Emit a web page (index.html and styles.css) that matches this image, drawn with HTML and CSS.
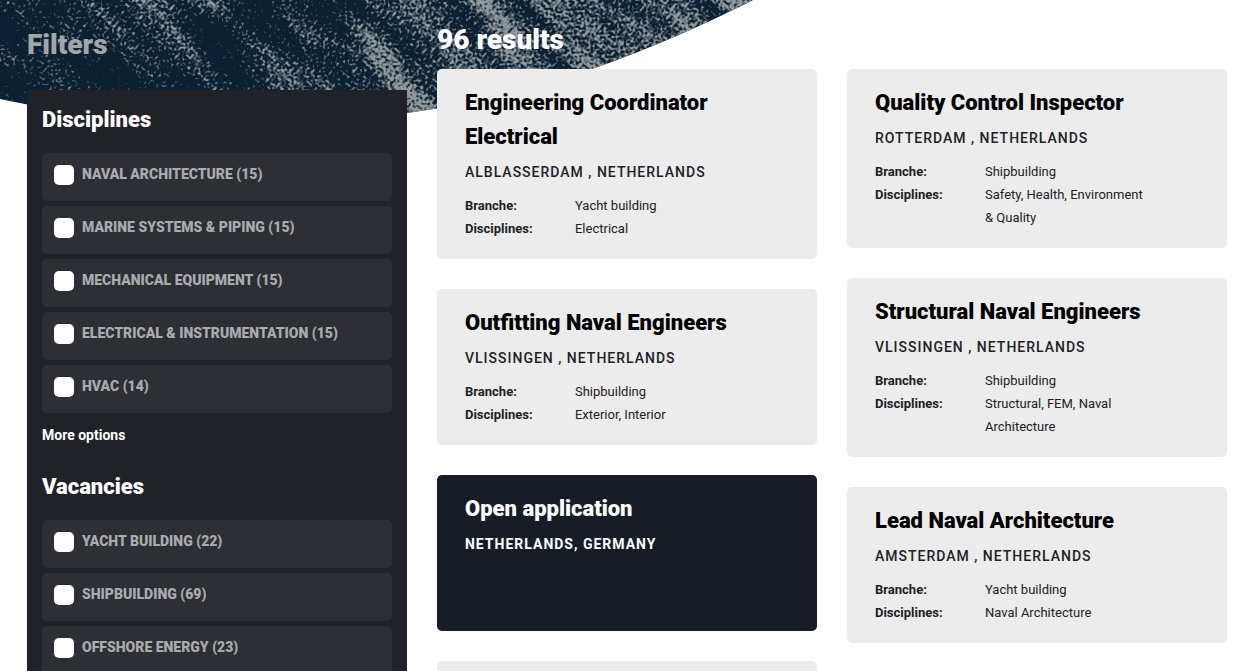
FILE: index.html
```html
<!DOCTYPE html>
<html lang="en">
<head>
<meta charset="utf-8">
<meta name="viewport" content="width=device-width, initial-scale=1">
<title>Vacancies</title>
<link rel="stylesheet" href="styles.css">
</head>
<body>
<svg class="sea" width="760" height="130" viewBox="0 0 760 130" aria-hidden="true">
  <defs>
    <clipPath id="wave"><path d="M0 0V99C100 121 300 131 407 113C470 104 520 93 592 69C650 49 710 22 753 0Z"/></clipPath>
    <linearGradient id="density" gradientUnits="userSpaceOnUse" x1="60" y1="-180" x2="640" y2="320" gradientTransform="rotate(-42 380 65)">
      <stop offset="0" stop-color="#fff" stop-opacity="0.3"/>
      <stop offset="0.4" stop-color="#fff" stop-opacity="0.5"/>
      <stop offset="0.6" stop-color="#fff" stop-opacity="0.74"/>
      <stop offset="1" stop-color="#fff" stop-opacity="0.78"/>
    </linearGradient>
    <filter id="foam" x="0" y="0" width="100%" height="100%" color-interpolation-filters="sRGB">
      <feTurbulence type="fractalNoise" baseFrequency="0.36" numOctaves="1" seed="4" result="f"/>
      <feColorMatrix in="f" values="0 0 0 0 1  0 0 0 0 1  0 0 0 0 1  1 0 0 0 0" result="fine"/>
      <feTurbulence type="fractalNoise" baseFrequency="0.009 0.035" numOctaves="3" seed="11" result="c"/>
      <feColorMatrix in="c" values="0 0 0 0 1  0 0 0 0 1  0 0 0 0 1  0 1 0 0 0" result="coarse"/>
      <feComposite in="fine" in2="coarse" operator="arithmetic" k2="0.62" k3="0.38" result="mix"/>
      <feComposite in="mix" in2="SourceGraphic" operator="arithmetic" k2="0.7" k3="0.2" result="sum"/>
      <feColorMatrix in="sum" values="0 0 0 0 0.57  0 0 0 0 0.6  0 0 0 0 0.61  0 0 0 10 -4.6"/>
    </filter>
  </defs>
  <g clip-path="url(#wave)">
    <rect width="760" height="130" fill="#0b2133"/>
    <g transform="rotate(42 380 65)">
      <rect x="-40" y="-260" width="840" height="650" fill="url(#density)" filter="url(#foam)"/>
    </g>
  </g>
</svg>

<div class="page">
  <aside class="sidebar">
    <h2 class="sidebar-title">Filters</h2>
    <form class="panel">
      <fieldset class="group">
        <legend class="group-title">Disciplines</legend>
        <div class="options">
          <label class="option"><input class="tick" type="checkbox"><span>NAVAL ARCHITECTURE (15)</span></label>
          <label class="option"><input class="tick" type="checkbox"><span>MARINE SYSTEMS &amp; PIPING (15)</span></label>
          <label class="option"><input class="tick" type="checkbox"><span>MECHANICAL EQUIPMENT (15)</span></label>
          <label class="option"><input class="tick" type="checkbox"><span>ELECTRICAL &amp; INSTRUMENTATION (15)</span></label>
          <label class="option"><input class="tick" type="checkbox"><span>HVAC (14)</span></label>
        </div>
        <button class="more" type="button">More options</button>
      </fieldset>
      <fieldset class="group">
        <legend class="group-title">Vacancies</legend>
        <div class="options">
          <label class="option"><input class="tick" type="checkbox"><span>YACHT BUILDING (22)</span></label>
          <label class="option"><input class="tick" type="checkbox"><span>SHIPBUILDING (69)</span></label>
          <label class="option"><input class="tick" type="checkbox"><span>OFFSHORE ENERGY (23)</span></label>
        </div>
      </fieldset>
    </form>
  </aside>

  <main class="results">
    <h1 class="results-title">96 results</h1>
    <div class="columns">
      <div class="column">
        <a class="card" href="#">
          <h3 class="card-title">Engineering Coordinator Electrical</h3>
          <p class="place">ALBLASSERDAM , NETHERLANDS</p>
          <dl class="facts"><dt>Branche:</dt><dd>Yacht building</dd><dt>Disciplines:</dt><dd>Electrical</dd></dl>
        </a>
        <a class="card" href="#">
          <h3 class="card-title">Outfitting Naval Engineers</h3>
          <p class="place">VLISSINGEN , NETHERLANDS</p>
          <dl class="facts"><dt>Branche:</dt><dd>Shipbuilding</dd><dt>Disciplines:</dt><dd>Exterior, Interior</dd></dl>
        </a>
        <a class="card card-dark" href="#">
          <h3 class="card-title">Open application</h3>
          <p class="place">NETHERLANDS, GERMANY</p>
        </a>
        <a class="card" href="#"></a>
      </div>
      <div class="column">
        <a class="card" href="#">
          <h3 class="card-title">Quality Control Inspector</h3>
          <p class="place">ROTTERDAM , NETHERLANDS</p>
          <dl class="facts"><dt>Branche:</dt><dd>Shipbuilding</dd><dt>Disciplines:</dt><dd>Safety, Health, Environment &amp; Quality</dd></dl>
        </a>
        <a class="card" href="#">
          <h3 class="card-title">Structural Naval Engineers</h3>
          <p class="place">VLISSINGEN , NETHERLANDS</p>
          <dl class="facts"><dt>Branche:</dt><dd>Shipbuilding</dd><dt>Disciplines:</dt><dd>Structural, FEM, Naval Architecture</dd></dl>
        </a>
        <a class="card" href="#">
          <h3 class="card-title">Lead Naval Architecture</h3>
          <p class="place">AMSTERDAM , NETHERLANDS</p>
          <dl class="facts"><dt>Branche:</dt><dd>Yacht building</dd><dt>Disciplines:</dt><dd>Naval Architecture</dd></dl>
        </a>
      </div>
    </div>
  </main>
</div>
</body>
</html>
```

FILE: styles.css
```css
* { box-sizing: border-box; }

body {
  margin: 0;
  height: 100vh;
  overflow: hidden;
  background: #fff;
  color: #1e2126;
  font: 13px/23px Roboto, "Liberation Sans", sans-serif;
}

h1, h2, h3, p, dl, dd { margin: 0; }

.sea {
  position: absolute;
  top: 0;
  left: 0;
}

/* One sidebar column and two result columns, all equally wide. */
.page {
  position: relative;
  display: grid;
  grid-template-columns: calc((100% - 60px) / 3) 1fr;
  gap: 30px;
  padding: 0 22px 0 27px;
}

.sidebar-title,
.results-title {
  font-size: 28px;
  font-weight: 900;
  line-height: 34px;
}

.sidebar-title {
  padding: 28px 0;
  color: #a3a5a7;
}

.results-title {
  padding: 23px 0 12px;
  color: #fff;
}

.panel {
  padding: 15px;
  background: #1f2227;
}

.group {
  min-width: 0;
  margin: 0 0 26px;
  padding: 0;
  border: 0;
}

.group-title {
  padding: 0 0 18px;
  color: #fff;
  font-size: 22px;
  font-weight: 900;
  line-height: 30px;
}

.options {
  display: grid;
  gap: 5px;
}

.option {
  display: flex;
  gap: 8px;
  height: 48px;
  padding: 12px 12px 0;
  border-radius: 5px;
  background: #2c2f34;
  color: #a9abad;
  font-size: 14px;
  font-weight: 900;
  line-height: 18px;
}

.tick {
  appearance: none;
  width: 20px;
  height: 20px;
  margin: 0;
  border-radius: 5px;
  background: #fff;
}

.more {
  display: block;
  margin-top: 11px;
  padding: 0;
  border: 0;
  background: none;
  color: #fff;
  font: bold 14px/22px Roboto, "Liberation Sans", sans-serif;
}

.columns {
  display: grid;
  grid-template-columns: 1fr 1fr;
  align-items: start;
  gap: 30px;
}

.column {
  display: grid;
  gap: 30px;
}

.card {
  display: block;
  min-height: 156px;
  padding: 17px 28px 19px;
  border-radius: 5px;
  background: #ececec;
  color: inherit;
  text-decoration: none;
}

.card-title {
  color: #000;
  font-size: 22px;
  font-weight: 900;
  line-height: 34px;
}

.place {
  margin: 7px 0 11px;
  font-size: 14px;
  font-weight: 500;
  line-height: 22px;
  letter-spacing: 1px;
}

.facts {
  display: grid;
  grid-template-columns: 110px minmax(0, 168px);
}

.facts dt { font-weight: 700; }

.card-dark { background: #161d27; }

.card-dark .card-title,
.card-dark .place { color: #fff; }

.card-dark .place { font-weight: 700; }
```
